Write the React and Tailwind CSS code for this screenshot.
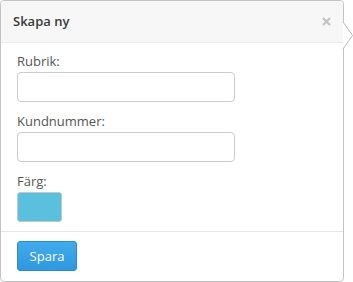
import React from 'react'

function Field({ label, children, first }) {
  return (
    <div className={first ? '' : 'mt-[10px]'}>
      <label className="block h-[18px] leading-[18px] text-[13px] text-[#555] mb-[2px]">{label}</label>
      {children}
    </div>
  )
}

export default function App() {
  return (
    <div className="relative w-[353px] h-[282px] bg-white overflow-hidden" style={{ fontFamily: '"Open Sans", "Noto Sans", sans-serif' }}>
      <div className="w-[344px] h-[282px] border border-[#c4c4c4] rounded-[4px] bg-white flex flex-col">
        <div className="h-[42px] shrink-0 flex items-center justify-between pl-[12px] pr-[12px] bg-[#f7f7f7] border-b border-[#ebebeb] rounded-t-[4px]">
          <h3 className="text-[13px] font-semibold text-[#3a3a3a]">Skapa ny</h3>
          <button type="button" className="w-[10px] h-[10px] flex items-center justify-center">
            <svg width="9" height="9" viewBox="0 0 9 9">
              <path d="M1 1 L8 8 M8 1 L1 8" stroke="#c2c2c2" strokeWidth="2.2" strokeLinecap="butt" />
            </svg>
          </button>
        </div>

        <div className="px-[16px] pt-[9px] pb-[9px] border-b border-[#e6e6e6]">
          <Field label="Rubrik:" first>
            <input type="text" className="block w-[218px] h-[30px] border border-[#cccccc] rounded-[4px] bg-white outline-none px-2 text-[13px]" />
          </Field>
          <Field label="Kundnummer:">
            <input type="text" className="block w-[218px] h-[30px] border border-[#cccccc] rounded-[4px] bg-white outline-none px-2 text-[13px]" />
          </Field>
          <Field label="Färg:">
            <div className="w-[45px] h-[30px] rounded-[3px] border border-[#c6c6c6] bg-[#5bc0de]" />
          </Field>
        </div>

        <div className="px-[16px] pt-[9px]">
          <button type="button" className="w-[60px] h-[30px] rounded-[3px] border border-[#2b8bd1] bg-gradient-to-b from-[#42abed] to-[#2f97dc] text-white text-[13px] leading-none">
            Spara
          </button>
        </div>
      </div>

      <svg className="absolute left-[342px] top-[22px]" width="11" height="27" viewBox="0 0 11 27">
        <path d="M1 0 L11 13.5 L1 27 Z" fill="#ffffff" />
        <path d="M1 0 L10.5 13.5 L1 27" fill="none" stroke="#b9b9b9" strokeWidth="1" />
      </svg>
    </div>
  )
}
